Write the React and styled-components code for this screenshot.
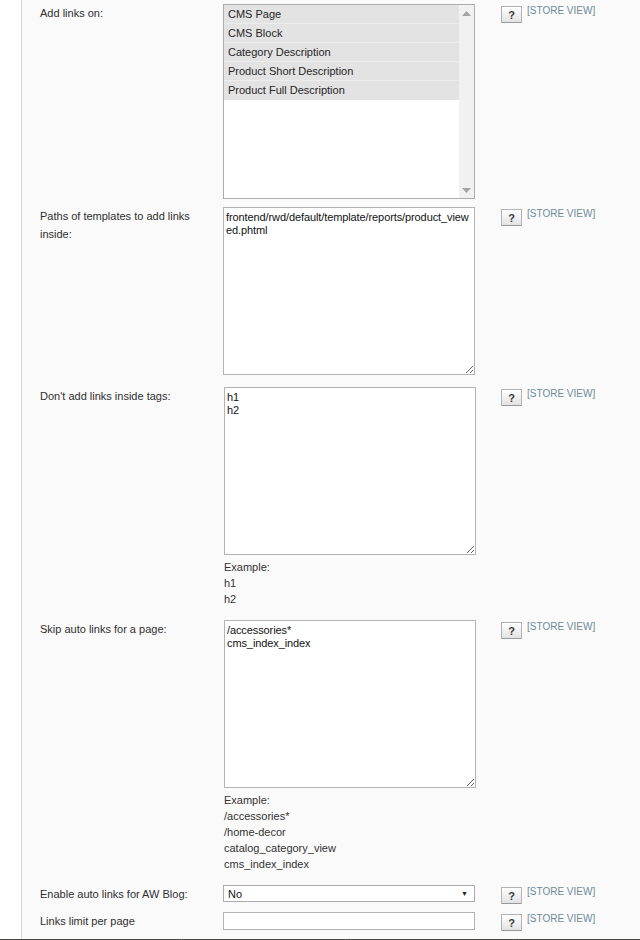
import React from 'react';
import styled, { createGlobalStyle } from 'styled-components';

const GlobalStyle = createGlobalStyle`
  html, body {
    margin: 0;
    padding: 0;
    background: #fff;
  }
  body {
    font-family: "Liberation Sans", Arial, sans-serif;
    font-size: 11px;
    color: #2f2f2f;
  }
`;

const Page = styled.div`
  width: 640px;
  height: 940px;
  display: flex;
  flex-direction: column;
  overflow: hidden;
`;

const Main = styled.div`
  display: flex;
  flex: 1;
`;

const Gutter = styled.div`
  width: 21px;
  background: #fff;
`;

const Panel = styled.div`
  flex: 1;
  background: #fafafa;
  border-left: 1px solid #d4d4d4;
  padding-bottom: 4px;
`;

const Row = styled.div`
  display: flex;
  align-items: flex-start;
  padding: 4px 0 ${props => props.tail || 4}px 18px;
`;

const Label = styled.div`
  width: 183px;
  flex-shrink: 0;
  padding-right: 8px;
  box-sizing: border-box;
  line-height: 18px;
`;

const Value = styled.div`
  width: 253px;
  flex-shrink: 0;
`;

const Scope = styled.div`
  display: flex;
  align-items: flex-start;
  gap: 5px;
  margin-left: 25px;
  padding-top: 2px;
`;

const HelpButton = styled.button`
  width: 21px;
  height: 17px;
  padding: 0;
  border: 1px solid #b3b3b3;
  border-bottom-color: #999;
  border-radius: 1px;
  background: linear-gradient(#ffffff, #e2e2e2);
  font-family: "Liberation Sans", Arial, sans-serif;
  font-size: 11px;
  font-weight: bold;
  color: #3b3b3b;
  line-height: 14px;
  cursor: pointer;
`;

const ScopeLabel = styled.span`
  font-size: 10px;
  color: #6f8b99;
  line-height: 10px;
`;

const ListBox = styled.div`
  display: flex;
  height: 195px;
  width: 252px;
  box-sizing: border-box;
  border: 1px solid #acacac;
  background: #fff;
`;

const Options = styled.div`
  flex: 1;
  display: flex;
  flex-direction: column;
`;

const Option = styled.div`
  height: 18px;
  line-height: 18px;
  padding-left: 4px;
  background: #e3e3e3;
  border-bottom: 1px solid #ededed;
  color: #262626;
  &:last-child {
    border-bottom: none;
    height: 19px;
  }
`;

const ScrollBar = styled.div`
  width: 15px;
  background: #f1f1f1;
  display: flex;
  flex-direction: column;
  justify-content: space-between;
  align-items: center;
  padding: 6px 0 5px;
`;

const TextArea = styled.textarea`
  display: block;
  width: 252px;
  height: 168px;
  margin: ${props => props.shift ? '0 0 4px 1px' : '0 0 4px'};
  box-sizing: border-box;
  border: 1px solid #b3b3b3;
  background: #fff;
  padding: 3px 1px 3px 2px;
  font-family: "Liberation Sans", Arial, sans-serif;
  font-size: 11px;
  line-height: 13px;
  letter-spacing: -0.1px;
  color: #111;
  word-break: break-all;
  resize: both;
  outline: none;
`;

const Note = styled.div`
  padding-left: 1px;
  line-height: 16px;
  color: #333;
  padding-bottom: 5px;
`;

const SelectBox = styled.div`
  display: flex;
  align-items: center;
  justify-content: space-between;
  width: 252px;
  height: 17px;
  box-sizing: border-box;
  border: 1px solid #acacac;
  background: #fff;
  padding: 0 6px 0 4px;
  color: #111;
`;

const Arrow = styled.span`
  font-size: 7px;
  color: #222;
`;

const TextInput = styled.input`
  width: 252px;
  height: 18px;
  box-sizing: border-box;
  border: 1px solid #b3b3b3;
  background: #fff;
  padding: 0 3px;
  font-family: "Liberation Sans", Arial, sans-serif;
  font-size: 11px;
  outline: none;
`;

const Footer = styled.div`
  height: 4px;
  background: #4a4943;
  display: flex;
`;

const FooterCell = styled.div`
  width: ${props => props.w}px;
  border-right: 1px solid #5d5c55;
`;

const Triangle = ({ up }) => (
  <svg width="9" height="5" viewBox="0 0 9 5">
    <path d={up ? 'M0 5 L4.5 0 L9 5 Z' : 'M0 0 L4.5 5 L9 0 Z'} fill="#a3a3a3" />
  </svg>
);

const ScopeCell = () => (
  <Scope>
    <HelpButton>?</HelpButton>
    <ScopeLabel>[STORE VIEW]</ScopeLabel>
  </Scope>
);

const options = [
  'CMS Page',
  'CMS Block',
  'Category Description',
  'Product Short Description',
  'Product Full Description',
];

export default function App() {
  return (
    <Page>
      <GlobalStyle />
      <Main>
        <Gutter />
        <Panel>
          <Row tail={4}>
            <Label>Add links on:</Label>
            <Value>
              <ListBox>
                <Options>
                  {options.map(opt => <Option key={opt}>{opt}</Option>)}
                </Options>
                <ScrollBar>
                  <Triangle up />
                  <Triangle />
                </ScrollBar>
              </ListBox>
            </Value>
            <ScopeCell />
          </Row>

          <Row tail={0}>
            <Label>Paths of templates to add links inside:</Label>
            <Value>
              <TextArea readOnly defaultValue="frontend/rwd/default/template/reports/product_viewed.phtml" />
            </Value>
            <ScopeCell />
          </Row>

          <Row tail={0}>
            <Label>Don't add links inside tags:</Label>
            <Value>
              <TextArea shift readOnly defaultValue={'h1\nh2'} />
              <Note>
                Example:<br />h1<br />h2
              </Note>
            </Value>
            <ScopeCell />
          </Row>

          <Row tail={4}>
            <Label>Skip auto links for a page:</Label>
            <Value>
              <TextArea shift readOnly defaultValue={'/accessories*\ncms_index_index'} />
              <Note>
                Example:<br />/accessories*<br />/home-decor<br />catalog_category_view<br />cms_index_index
              </Note>
            </Value>
            <ScopeCell />
          </Row>

          <Row>
            <Label>Enable auto links for AW Blog:</Label>
            <Value>
              <SelectBox>
                <span>No</span>
                <Arrow>▼</Arrow>
              </SelectBox>
            </Value>
            <ScopeCell />
          </Row>

          <Row>
            <Label>Links limit per page</Label>
            <Value>
              <TextInput readOnly />
            </Value>
            <ScopeCell />
          </Row>
        </Panel>
      </Main>
      <Footer>
        <FooterCell w={13} />
        <FooterCell w={167} />
        <FooterCell w={163} />
        <FooterCell w={167} />
      </Footer>
    </Page>
  );
}
